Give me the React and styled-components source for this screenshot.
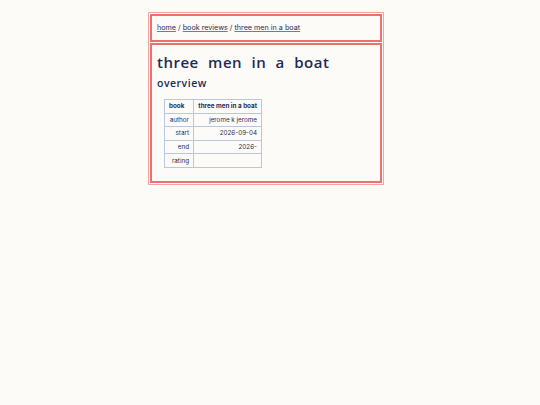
import React from "react";
import styled, { createGlobalStyle } from "styled-components";

const GlobalStyle = createGlobalStyle`
  body {
    margin: 0;
    background: #fdfbf8;
    color: #1f2b55;
    font-family: Inter, "Liberation Sans", sans-serif;
  }
`;

const Page = styled.div`
  display: flex;
  justify-content: center;
  padding: 12px 8px 0 0;
`;

const Frame = styled.div`
  width: 232px;
  border: 1px solid #f4a3a3;
  padding: 1px;
  display: flex;
  flex-direction: column;
  gap: 1px;
`;

const Box = styled.section`
  border: 2px solid #ee6f6f;
  padding: ${(p) => p.$pad || "6px"};
`;

const Crumbs = styled.nav`
  font-size: 7.2px;
  line-height: 11px;

  a {
    color: #1f2b55;
    text-decoration: underline;
    text-decoration-color: #6f7a9c;
  }
`;

const Title = styled.h1`
  margin: 0;
  font-family: "Open Sans", "DejaVu Sans", sans-serif;
  font-weight: 600;
  font-size: 15px;
  line-height: 20px;
  letter-spacing: 0.5px;
  word-spacing: 5px;
`;

const Subtitle = styled.h2`
  margin: 4px 0 0;
  font-family: "Open Sans", "DejaVu Sans", sans-serif;
  font-weight: 600;
  font-size: 10.5px;
  line-height: 14px;
  letter-spacing: 0.5px;
`;

const Table = styled.table`
  margin: 9px 0 13px 7px;
  border-collapse: collapse;
  font-size: 6.3px;
  color: #1f2b55;

  th,
  td {
    border: 1px solid #b9c6de;
    height: 12.6px;
    padding: 0 4px;
    text-align: right;
    white-space: nowrap;
  }

  th {
    font-weight: 700;
  }

  th:first-child {
    text-align: left;
  }

  td:first-child,
  th:first-child {
    width: 20px;
  }

  td:last-child,
  th:last-child {
    width: 59px;
  }
`;

const rows = [
  ["author", "jerome k jerome"],
  ["start", "2026-09-04"],
  ["end", "2026-"],
  ["rating", ""],
];

export default function App() {
  return (
    <>
      <GlobalStyle />
      <Page>
        <Frame>
          <Box $pad="6px 4px 7px 5px">
            <Crumbs>
              <a href="#">home</a> / <a href="#">book reviews</a> /{" "}
              <a href="#">three men in a boat</a>
            </Crumbs>
          </Box>
          <Box $pad="7px 5px 0">
            <Title>three men in a boat</Title>
            <Subtitle>overview</Subtitle>
            <Table>
              <thead>
                <tr>
                  <th>book</th>
                  <th>three men in a boat</th>
                </tr>
              </thead>
              <tbody>
                {rows.map(([k, v]) => (
                  <tr key={k}>
                    <td>{k}</td>
                    <td>{v}</td>
                  </tr>
                ))}
              </tbody>
            </Table>
          </Box>
        </Frame>
      </Page>
    </>
  );
}
